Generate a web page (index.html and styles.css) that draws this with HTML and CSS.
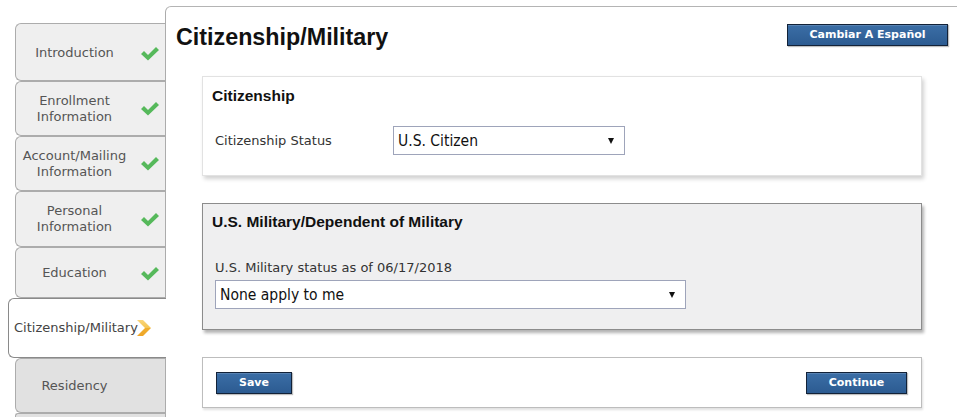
FILE: index.html
```html
<!DOCTYPE html>
<html lang="en">
<head>
<meta charset="utf-8">
<title>Citizenship/Military</title>
<link rel="stylesheet" href="styles.css">
</head>
<body>
<div class="page">
  <nav class="sidebar">
    <div class="tab done t-intro"><span class="tab-label">Introduction</span><svg class="check" viewBox="0 0 18 14" width="18" height="15"><path d="M0 7.5 L3 4.5 L7 8.5 L15 0.5 L18 3.5 L7 14 Z"/></svg></div>
    <div class="tab done t-enroll"><span class="tab-label">Enrollment<br>Information</span><svg class="check" viewBox="0 0 18 14" width="18" height="15"><path d="M0 7.5 L3 4.5 L7 8.5 L15 0.5 L18 3.5 L7 14 Z"/></svg></div>
    <div class="tab done t-account"><span class="tab-label">Account/Mailing<br>Information</span><svg class="check" viewBox="0 0 18 14" width="18" height="15"><path d="M0 7.5 L3 4.5 L7 8.5 L15 0.5 L18 3.5 L7 14 Z"/></svg></div>
    <div class="tab done t-personal"><span class="tab-label">Personal<br>Information</span><svg class="check" viewBox="0 0 18 14" width="18" height="15"><path d="M0 7.5 L3 4.5 L7 8.5 L15 0.5 L18 3.5 L7 14 Z"/></svg></div>
    <div class="tab done t-edu"><span class="tab-label">Education</span><svg class="check" viewBox="0 0 18 14" width="18" height="15"><path d="M0 7.5 L3 4.5 L7 8.5 L15 0.5 L18 3.5 L7 14 Z"/></svg></div>
    <div class="tab active"><span class="tab-label">Citizenship/Military</span><svg class="chev" viewBox="0 0 14 16" width="14" height="16"><defs><linearGradient id="chevg" x1="0" y1="0" x2="0" y2="1"><stop offset="0" stop-color="#f9d57a"/><stop offset="0.5" stop-color="#f5c552"/><stop offset="0.5" stop-color="#f0ae2e"/><stop offset="1" stop-color="#eea628"/></linearGradient></defs><path d="M0 0 H6 L14 8 L6 16 H0 L8 8 Z" fill="url(#chevg)"/></svg></div>
    <div class="tab todo t-res"><span class="tab-label">Residency</span></div>
    <div class="tab todo t-next"></div>
  </nav>
  <main class="panel">
    <header class="panel-head">
      <h1 class="page-title">Citizenship/Military</h1>
      <button class="btn btn-lang" type="button">Cambiar A Español</button>
    </header>

    <section class="card card-citizen">
      <h2 class="card-title">Citizenship</h2>
      <div class="field-row">
        <span class="field-label">Citizenship Status</span>
        <div class="select select-citizen"><span class="select-value">U.S. Citizen</span><span class="select-arrow"></span></div>
      </div>
    </section>

    <section class="card card-military">
      <h2 class="card-title">U.S. Military/Dependent of Military</h2>
      <div class="field-label stacked">U.S. Military status as of 06/17/2018</div>
      <div class="select select-military"><span class="select-value">None apply to me</span><span class="select-arrow"></span></div>
    </section>

    <section class="card card-actions">
      <button class="btn btn-save" type="button">Save</button>
      <button class="btn btn-continue" type="button">Continue</button>
    </section>
  </main>
</div>
</body>
</html>
```

FILE: styles.css
```css
html, body {
  margin: 0;
  padding: 0;
  background: #ffffff;
}

body {
  font-family: "DejaVu Sans", Verdana, sans-serif;
  overflow: hidden;
}

.page {
  display: flex;
  align-items: stretch;
  width: 960px;
  height: 417px;
  overflow: hidden;
}

/* ---------- sidebar tabs ---------- */
.sidebar {
  flex: 0 0 165px;
  width: 165px;
  padding-top: 23px;
  display: flex;
  flex-direction: column;
}

.tab {
  box-sizing: border-box;
  flex-shrink: 0;
  margin-left: 15px;
  width: 150px;
  display: flex;
  align-items: center;
  background: #efefef;
  border: 1px solid #acacac;
  border-right: none;
  border-radius: 6px 0 0 6px;
}

.tab-label {
  display: block;
  width: 117px;
  text-align: center;
  font-size: 13px;
  line-height: 16px;
  color: #555555;
}

.check {
  display: block;
  margin-left: 8px;
  fill: #56b95b;
}

.t-intro { height: 58px; padding-top: 2px; }
.t-enroll { height: 55px; }
.t-account { height: 55px; }
.t-personal { height: 56px; }
.t-edu { height: 51px; padding-top: 1px; }

.tab.active {
  position: relative;
  z-index: 1;
  margin-left: 8px;
  width: 158px;
  height: 60px;
  background: #ffffff;
  border: 1px solid #8a8a8a;
  border-right: none;
  padding-left: 5px;
}

.tab.active .tab-label {
  width: auto;
  text-align: left;
  color: #444444;
}

.chev {
  display: block;
  margin-left: -1px;
}

.tab.todo {
  background: #e1e1e1;
}

.t-res { height: 55px; }
.t-next { height: 6px; border-bottom: none; }

/* ---------- main panel ---------- */
.panel {
  box-sizing: border-box;
  flex: 0 0 792px;
  width: 792px;
  margin-top: 6px;
  border-top: 1px solid #b4b4b4;
  border-left: 1px solid #acacac;
  border-top-left-radius: 6px;
  background: #ffffff;
}

.panel-head {
  display: flex;
  justify-content: space-between;
  align-items: flex-start;
  padding: 17px 9px 0 10px;
}

.page-title {
  margin: 0;
  font-family: "Liberation Sans", Arial, sans-serif;
  font-weight: bold;
  font-size: 23.3px;
  line-height: 27px;
  color: #111111;
}

.btn {
  box-sizing: border-box;
  height: 22px;
  padding: 0;
  border: 1px solid #122238;
  background: linear-gradient(#3b6ea6, #2c5b91);
  box-shadow: inset 0 1px 0 rgba(255, 255, 255, 0.15), 1px 1px 1px rgba(0, 0, 0, 0.25);
  color: #ffffff;
  font-family: "DejaVu Sans", Verdana, sans-serif;
  font-weight: bold;
  font-size: 11px;
  line-height: 20px;
  text-align: center;
  cursor: pointer;
}

.btn-lang { width: 161px; }
.btn-save { width: 76px; }
.btn-continue { width: 101px; }

/* ---------- cards ---------- */
.card {
  box-sizing: border-box;
  margin: 0 35px 0 36px;
  width: 720px;
  background: #ffffff;
}

.card-citizen {
  margin-top: 25px;
  border: 1px solid #e2e2e2;
  padding: 10px 9px 20px 9px;
  box-shadow: 2px 3px 4px rgba(0, 0, 0, 0.18);
}

.card-title {
  margin: 0;
  font-family: "Liberation Sans", Arial, sans-serif;
  font-weight: bold;
  font-size: 15.5px;
  line-height: 18px;
  color: #111111;
}

.field-row {
  display: flex;
  align-items: center;
  margin-top: 21px;
  padding-left: 3px;
}

.field-label {
  font-size: 13px;
  line-height: 16px;
  color: #333333;
}

.field-row .field-label {
  width: 178px;
  flex: 0 0 178px;
}

.select {
  box-sizing: border-box;
  height: 29px;
  display: flex;
  align-items: center;
  justify-content: space-between;
  padding: 0 10px 0 4px;
  background: #ffffff;
  border: 1px solid #9ea4ba;
}

.select-value {
  font-family: "DejaVu Sans Condensed", "DejaVu Sans", sans-serif;
  font-stretch: condensed;
  font-size: 15.5px;
  color: #111111;
}

.select-arrow {
  width: 0;
  height: 0;
  border-left: 3.5px solid transparent;
  border-right: 3.5px solid transparent;
  border-top: 6px solid #111111;
}

.select-citizen { width: 232px; }

.card-military {
  margin-top: 27px;
  border: 1px solid #8c8c8c;
  background: #efeff0;
  padding: 9px 9px 20px 9px;
  box-shadow: 2px 3px 3px rgba(0, 0, 0, 0.3);
}

.field-label.stacked {
  margin-top: 29px;
  padding-left: 3px;
}

.select-military {
  margin-top: 4px;
  margin-left: 3px;
  width: 471px;
}

.card-actions {
  margin-top: 27px;
  border: 1px solid #bdbdbd;
  padding: 14px 14px 13px 13px;
  display: flex;
  justify-content: space-between;
  align-items: center;
  box-shadow: 1px 2px 2px rgba(0, 0, 0, 0.12);
}
```
